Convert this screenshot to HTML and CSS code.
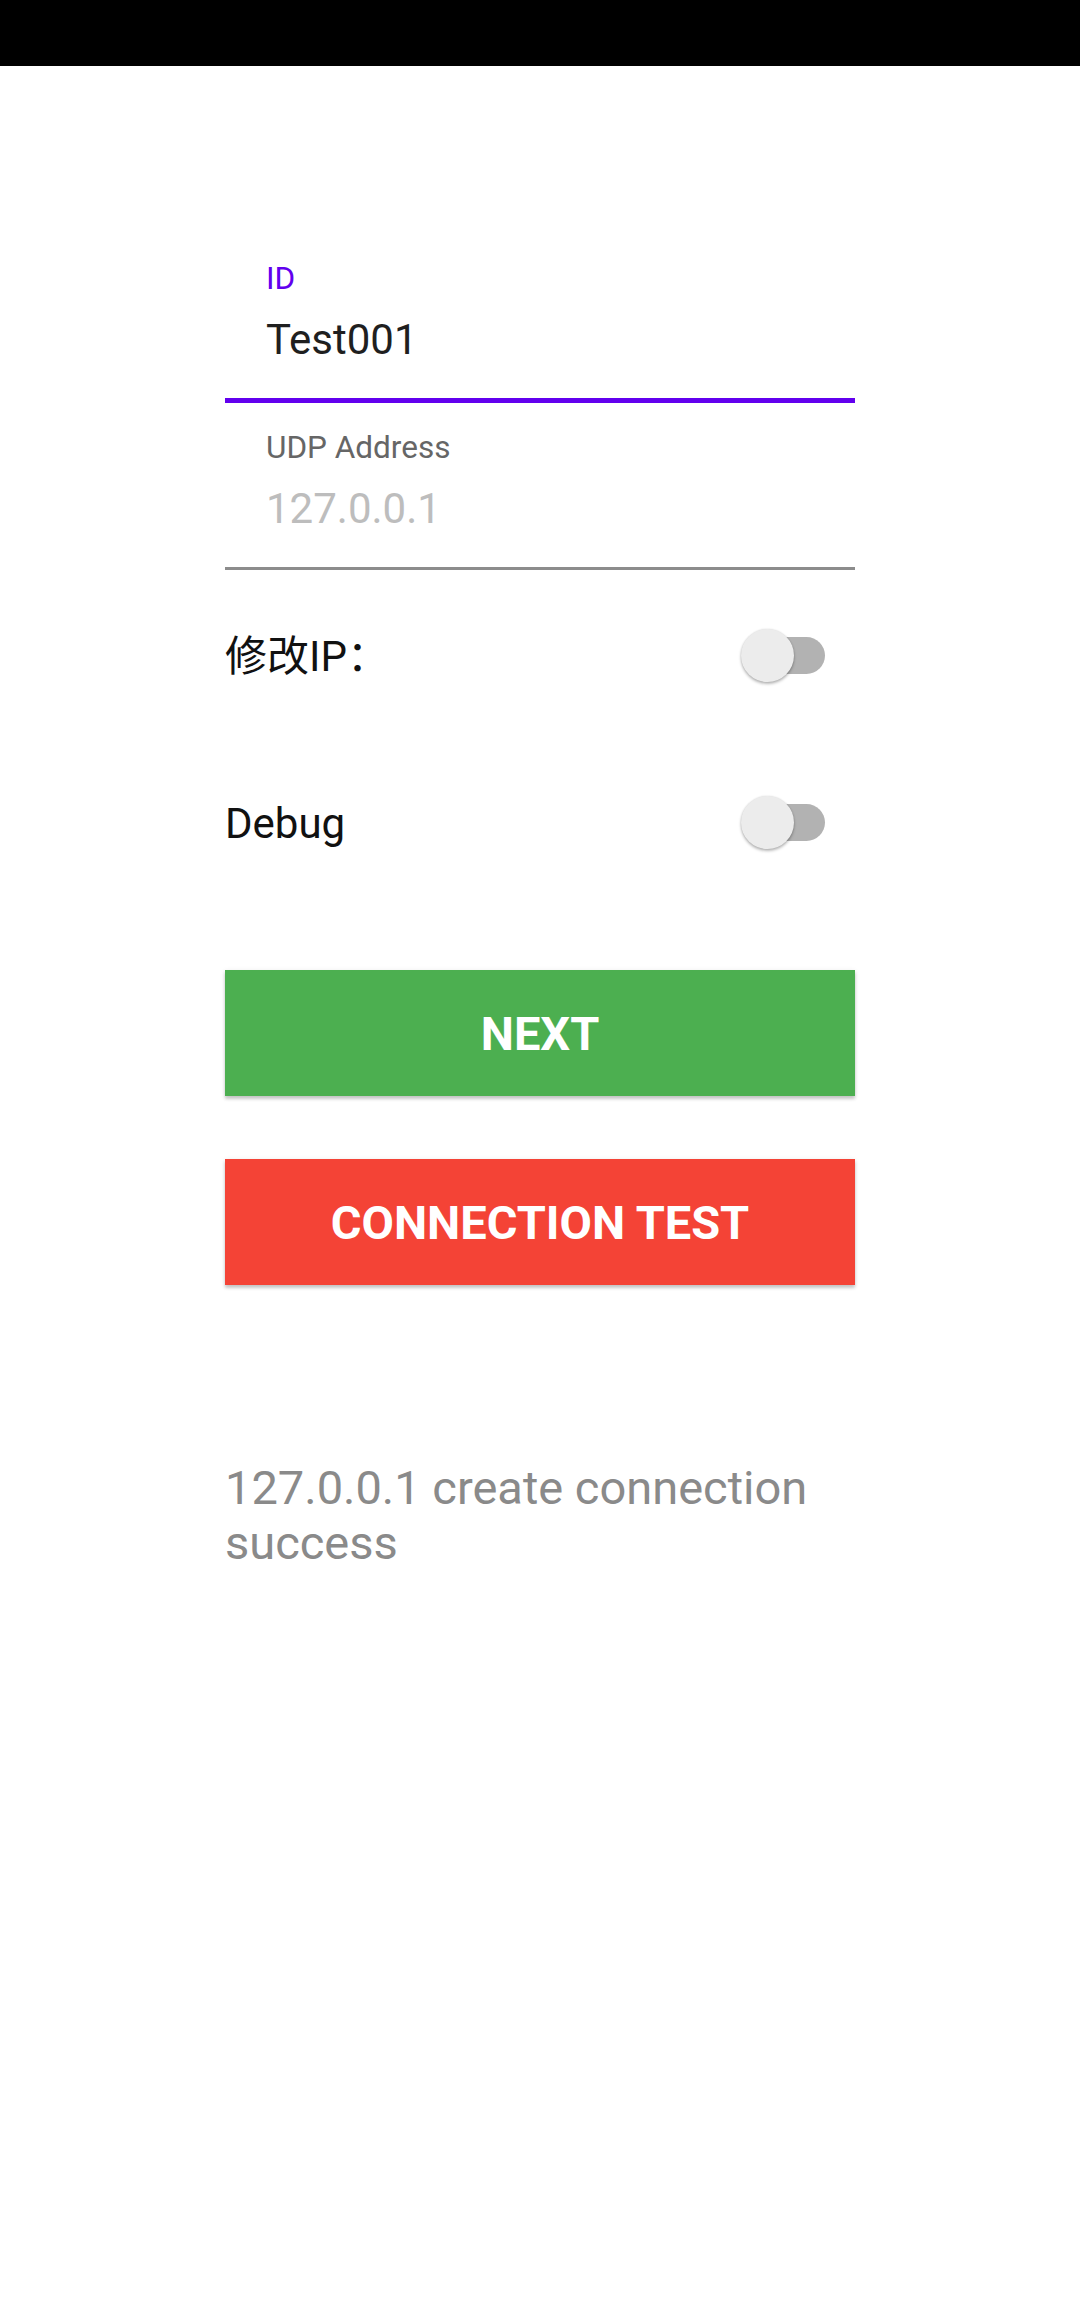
FILE: index.html
```html
<!DOCTYPE html>
<html lang="zh">
<head>
<meta charset="utf-8">
<title>Setup</title>
<link rel="stylesheet" href="styles.css">
</head>
<body>
<div class="statusbar"></div>
<main class="content">
  <div class="field field-focused">
    <div class="field-label label-focused">ID</div>
    <div class="field-value">Test001</div>
  </div>
  <div class="field">
    <div class="field-label">UDP Address</div>
    <div class="field-value value-hint">127.0.0.1</div>
  </div>
  <div class="toggles">
    <div class="toggle-row">
      <span class="toggle-text">修改IP：</span>
      <span class="switch"><span class="track"></span><span class="thumb"></span></span>
    </div>
    <div class="toggle-row">
      <span class="toggle-text">Debug</span>
      <span class="switch"><span class="track"></span><span class="thumb"></span></span>
    </div>
  </div>
  <div class="buttons">
    <button class="btn btn-green">NEXT</button>
    <button class="btn btn-red">CONNECTION TEST</button>
  </div>
  <p class="status">127.0.0.1 create connection success</p>
</main>
</body>
</html>
```
FILE: styles.css
```css
html, body {
  margin: 0;
  padding: 0;
  background: #ffffff;
}
body {
  width: 1080px;
  height: 2316px;
  overflow: hidden;
  font-family: Roboto, "Noto Sans CJK SC", sans-serif;
}
.statusbar {
  height: 66px;
  background: #000000;
}
.content {
  width: 630px;
  margin-left: 225px;
  padding-top: 168px;
}
.field {
  padding: 26px 0 34px 41px;
  border-bottom: 3px solid #8c8c8c;
}
.field-focused {
  border-bottom: 5px solid #6200ee;
}
.field-label {
  font-size: 31.5px;
  line-height: 37px;
  height: 37px;
  color: #666666;
}
.label-focused {
  color: #6200ee;
}
.field-value {
  margin-top: 18px;
  font-size: 42px;
  line-height: 49px;
  height: 49px;
  color: #1f1f1f;
}
.value-hint {
  color: #bdbdbd;
}
.toggles {
  padding-top: 21px;
  display: flex;
  flex-direction: column;
  gap: 37px;
}
.toggle-row {
  height: 130px;
  display: flex;
  align-items: center;
  justify-content: space-between;
}
.toggle-text {
  font-size: 42px;
  line-height: 49px;
  color: #111111;
  font-family: Roboto, "Noto Sans CJK SC", sans-serif;
}
.switch {
  position: relative;
  width: 84px;
  height: 54px;
  margin-right: 30px;
  display: block;
}
.track {
  position: absolute;
  left: 6px;
  right: 0;
  top: 8px;
  height: 37px;
  border-radius: 18.5px;
  background: #b2b2b2;
}
.thumb {
  position: absolute;
  left: 0;
  top: 0;
  width: 53px;
  height: 53px;
  border-radius: 50%;
  background: #ececec;
  box-shadow: 0 2px 3px rgba(0, 0, 0, 0.28), 0 0 2px rgba(0, 0, 0, 0.12);
}
.buttons {
  margin-top: 82px;
  display: flex;
  flex-direction: column;
  gap: 63px;
}
.btn {
  display: block;
  width: 630px;
  height: 126px;
  border: none;
  border-radius: 0;
  margin: 0;
  padding: 0;
  font-family: Roboto, sans-serif;
  font-size: 47px;
  font-weight: 700;
  color: #ffffff;
  box-shadow: 0 3px 3px rgba(0, 0, 0, 0.18), 0 1px 5px rgba(0, 0, 0, 0.1);
}
.btn-green {
  background: #4caf50;
}
.btn-red {
  background: #f44336;
}
.status {
  margin: 175px 0 0 0;
  font-size: 47px;
  line-height: 55.4px;
  color: #8a8a8a;
}
```
